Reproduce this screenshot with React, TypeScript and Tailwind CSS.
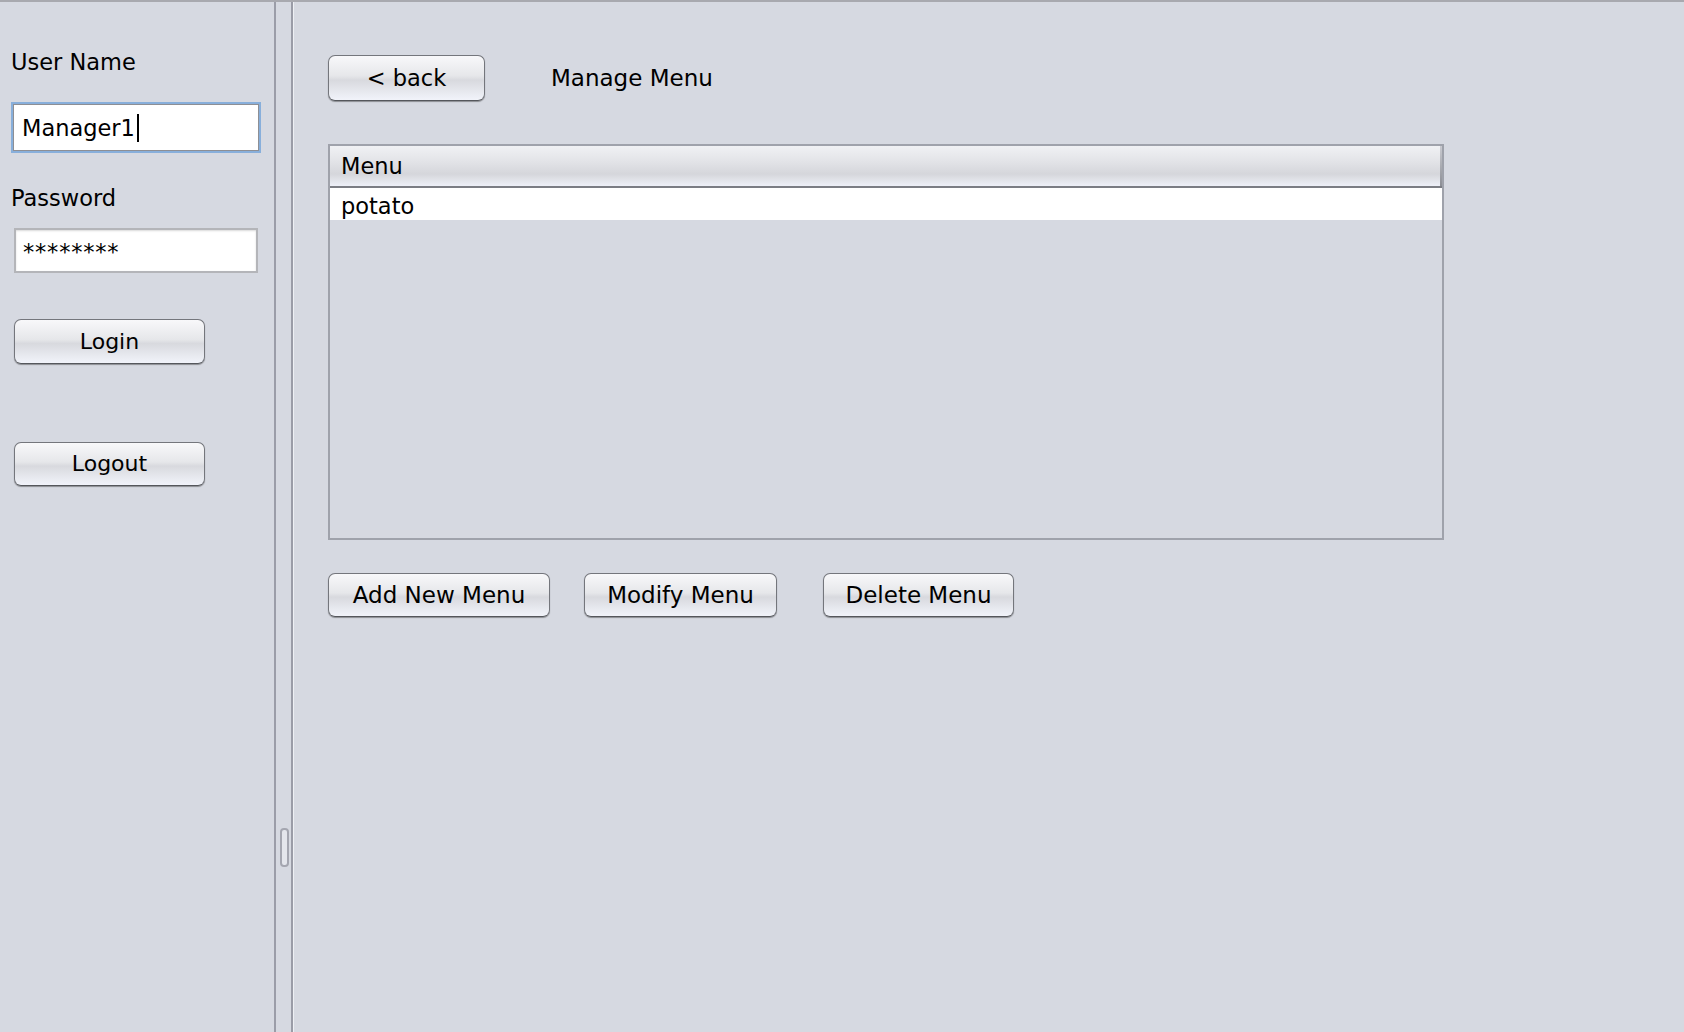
import type { ReactNode } from "react";

const font = "font-['DejaVu_Sans','Liberation_Sans',sans-serif]";

function AquaButton({ children, className = "" }: { children: ReactNode; className?: string }) {
  return (
    <button
      type="button"
      className={[
        "flex items-center justify-center rounded-[7px] border border-[#74767c] border-b-[#55575c]",
        "bg-[linear-gradient(to_bottom,#f8f8fa_0%,#e6e7ea_45%,#d8d9de_55%,#e9ebf1_85%,#f1f3fa_100%)]",
        "shadow-[0_1px_1px_rgba(0,0,0,0.35)] leading-[26px] text-black",
        className,
      ].join(" ")}
    >
      {children}
    </button>
  );
}

function LoginPanel() {
  return (
    <div className="w-[274px] shrink-0 pl-[11px] flex flex-col text-[22.5px]">
      <div className="mt-[47px] leading-[26px] text-black">User Name</div>
      <div className="mt-[29px] ml-[2px] w-[246px] h-[47px] bg-white border border-[#8e8f94] shadow-[0_0_0_2px_#88afdb] flex items-center pl-[8px]">
        <span className="leading-[26px] text-black">Manager1</span>
        <span className="ml-[2px] w-[2px] h-[28px] bg-black" />
      </div>
      <div className="mt-[34px] leading-[26px] text-black">Password</div>
      <div className="mt-[17px] ml-[3px] w-[244px] h-[45px] bg-white border-2 border-[#b4b5b9] shadow-[inset_0_1px_2px_rgba(0,0,0,0.15)] flex items-center pl-[7px] pt-[2px]">
        <span className="leading-[26px] tracking-[0.8px] text-black">********</span>
      </div>
      <AquaButton className="mt-[46px] ml-[3px] w-[191px] h-[45px] text-[22px]">Login</AquaButton>
      <AquaButton className="mt-[78px] ml-[3px] w-[191px] h-[44px] text-[22px]">Logout</AquaButton>
    </div>
  );
}

function Divider() {
  return (
    <div className="w-[20px] shrink-0 flex">
      <div className="w-[2px] bg-[#9b9da8]" />
      <div className="w-[15px] flex flex-col items-center">
        <div className="mt-[826px] ml-[1px] w-[9px] h-[39px] rounded-[4px] border-2 border-[#a4a6b0] bg-[#e4e6ec]" />
      </div>
      <div className="w-[2px] bg-[#9a9ca7]" />
      <div className="w-[1px] bg-[#eef0f4]" />
    </div>
  );
}

function MenuTable() {
  return (
    <div className="mt-[43px] w-[1116px] h-[396px] border-2 border-[#9fa2ab] flex flex-col text-[22.5px]">
      <div className="h-[42px] flex border-b-2 border-[#7b7d84] bg-[linear-gradient(to_bottom,#f0f1f4_0%,#e2e3e7_40%,#d5d6db_70%,#e4e6ec_88%,#eef0f8_100%)]">
        <div className="flex-1 flex items-center pl-[11px] leading-[26px] text-black">Menu</div>
        <div className="w-[2px] bg-[linear-gradient(to_bottom,#c9cad0,#8c8e95)]" />
      </div>
      <div className="h-[32px] bg-white flex items-center pl-[11px] pt-[4px] leading-[26px] text-black">
        potato
      </div>
    </div>
  );
}

function ManageMenu() {
  return (
    <div className="flex-1 pl-[34px] flex flex-col">
      <div className="mt-[53px] flex items-center">
        <AquaButton className="w-[157px] h-[46px] text-[22.5px]">&lt; back</AquaButton>
        <span className="ml-[66px] text-[23px] leading-[26px] text-black">Manage Menu</span>
      </div>
      <MenuTable />
      <div className="mt-[33px] flex">
        <AquaButton className="w-[222px] h-[44px] text-[23px]">Add New Menu</AquaButton>
        <AquaButton className="ml-[34px] w-[193px] h-[44px] text-[23px]">Modify Menu</AquaButton>
        <AquaButton className="ml-[46px] w-[191px] h-[44px] text-[23px]">Delete Menu</AquaButton>
      </div>
    </div>
  );
}

export default function App() {
  return (
    <div className={`${font} w-[1684px] h-[1032px] bg-[#d6d9e1] flex flex-col overflow-hidden`}>
      <div className="h-[2px] bg-[#a8a9af]" />
      <div className="flex-1 flex">
        <LoginPanel />
        <Divider />
        <ManageMenu />
      </div>
    </div>
  );
}
